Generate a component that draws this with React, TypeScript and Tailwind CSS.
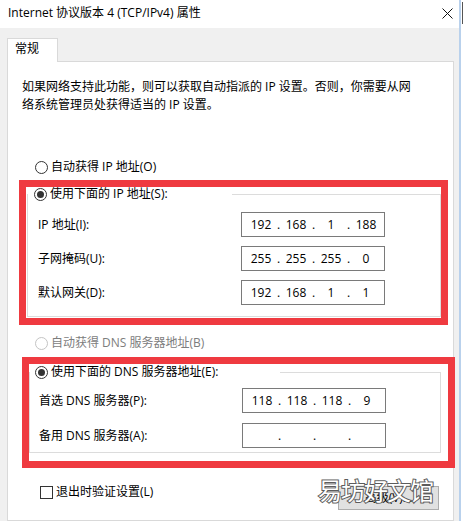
import React from 'react';

const font = "font-['Open_Sans','Noto_Sans_CJK_SC',sans-serif]";

function Radio({ checked, disabled }: { checked?: boolean; disabled?: boolean }) {
  return (
    <span
      className={
        disabled
          ? 'flex h-[13px] w-[13px] shrink-0 items-center justify-center rounded-full border border-[#c4c4c4] bg-white'
          : 'flex h-[13px] w-[13px] shrink-0 items-center justify-center rounded-full border border-[#333333] bg-white'
      }
    >
      {checked && <span className="h-[7px] w-[7px] rounded-full bg-[#333333]" />}
    </span>
  );
}

function IpBox({ parts }: { parts: string[] }) {
  return (
    <div className="flex h-[25px] w-[144px] shrink-0 items-center border border-[#7a7a7a] bg-white pl-[5px]">
      {parts.map((p, i) => (
        <React.Fragment key={i}>
          <span className="w-[28px] text-center">{p}</span>
          {i < 3 && <span className="w-[7px] text-center">.</span>}
        </React.Fragment>
      ))}
    </div>
  );
}

function Row({ label, parts, labelWidth }: { label: string; parts: string[]; labelWidth: string }) {
  return (
    <div className="flex items-center">
      <span className={labelWidth}>{label}</span>
      <IpBox parts={parts} />
    </div>
  );
}

export default function App() {
  return (
    <div className={`flex h-[521px] w-[465px] overflow-hidden bg-white text-[12px] leading-[18px] text-black ${font}`}>
      {/* Dialog */}
      <div className="relative flex w-[459px] shrink-0 flex-col bg-[#f0f0f0]">
        {/* Title bar */}
        <div className="flex h-[28px] items-center justify-between bg-white pb-[2px] pl-[8px] pr-[6px]">
          <span>Internet 协议版本 4 (TCP/IPv4) 属性</span>
          <svg width="11" height="11" viewBox="0 0 11 11" className="mt-[1px]">
            <path d="M0.5 0.5 L10.5 10.5 M10.5 0.5 L0.5 10.5" stroke="#111" strokeWidth="1" />
          </svg>
        </div>

        {/* Tab */}
        <div className="ml-[7px] mt-[10px] flex">
          <div className="relative z-10 -mb-px flex h-[24px] w-[51px] items-start border-x border-t border-[#d9d9d9] bg-white pl-[7px] pt-[1px]">
            常规
          </div>
        </div>

        {/* Panel */}
        <div className="ml-[7px] flex w-[447px] flex-1 flex-col border border-[#d9d9d9] bg-white">
          <p className="pl-[14px] pt-[16px]">
            如果网络支持此功能，则可以获取自动指派的 IP 设置。否则，你需要从网
            <br />
            络系统管理员处获得适当的 IP 设置。
          </p>

          <div className="ml-[27px] mt-[44px] flex items-center gap-[3px]">
            <Radio />
            <span>自动获得 IP 地址(O)</span>
          </div>

          {/* Red box 1 */}
          <div className="ml-[11px] mt-[4px] w-[429px] border-[7px] border-[#ef3a40] pb-[1px]">
            <div className="-mt-[2px] ml-px w-[414px]">
              <div className="flex h-[18px]">
                <div className="mt-[9px] h-[9px] w-[6px] border-l border-[#dcdcdc]" />
                <div className="flex w-[199px] items-center gap-[3px] pl-[1px]">
                  <Radio checked />
                  <span>使用下面的 IP 地址(S):</span>
                </div>
                <div className="mt-[9px] h-[9px] flex-1 border-r border-t border-[#dcdcdc]" />
              </div>
              <div className="flex flex-col gap-[9px] border-x border-b border-[#dcdcdc] pb-[11px] pt-[9px]">
                <Row label="IP 地址(I):" parts={['192', '168', '1', '188']} labelWidth="w-[213px] pl-[10px]" />
                <Row label="子网掩码(U):" parts={['255', '255', '255', '0']} labelWidth="w-[213px] pl-[10px]" />
                <Row label="默认网关(D):" parts={['192', '168', '1', '1']} labelWidth="w-[213px] pl-[10px]" />
              </div>
            </div>
          </div>

          <div className="ml-[27px] mt-[9px] flex items-center gap-[3px] text-[#7d7d7d]">
            <Radio disabled />
            <span>自动获得 DNS 服务器地址(B)</span>
          </div>

          {/* Red box 2 */}
          <div className="ml-[14px] mt-[5px] w-[433px] border-[7px] border-[#ef3a40] pb-[8px]">
            <div className="-mt-[1px] w-[412px]">
              <div className="flex h-[18px]">
                <div className="mt-[9px] h-[9px] w-[6px] border-l border-[#dcdcdc]" />
                <div className="flex w-[245px] items-center gap-[3px]">
                  <Radio checked />
                  <span>使用下面的 DNS 服务器地址(E):</span>
                </div>
                <div className="mt-[9px] h-[9px] flex-1 border-r border-t border-[#dcdcdc]" />
              </div>
              <div className="flex flex-col gap-[10px] border-x border-b border-[#dcdcdc] pb-[4px] pt-[7px]">
                <Row label="首选 DNS 服务器(P):" parts={['118', '118', '118', '9']} labelWidth="w-[212px] pl-[9px]" />
                <Row label="备用 DNS 服务器(A):" parts={['', '', '', '']} labelWidth="w-[212px] pl-[9px]" />
              </div>
            </div>
          </div>

          {/* Bottom row */}
          <div className="ml-[32px] mr-[14px] mt-[15px] flex items-start justify-between">
            <div className="flex items-center gap-[3px]">
              <span className="h-[13px] w-[13px] border border-[#333333] bg-white" />
              <span>退出时验证设置(L)</span>
            </div>
            <div className="mt-[3px] flex h-[24px] w-[101px] items-center justify-center border border-[#adadad] bg-[#e1e1e1]">
              高级(V)...
            </div>
          </div>
        </div>

        {/* Watermark */}
        <div className="absolute left-[318px] top-[476px] text-[24px] leading-[30px] tracking-[-1px] text-white [-webkit-text-stroke:2px_#5c5c5c] [paint-order:stroke_fill]">
          易坊好文馆
        </div>
      </div>

      {/* Edge of the window behind */}
      <div className="w-[2px] shrink-0 bg-[#b9d1ec]" />
      <div className="flex-1 bg-white">
        <div className="ml-[1px] mt-[2px] h-[22px] w-px bg-[#555]" />
      </div>
    </div>
  );
}
